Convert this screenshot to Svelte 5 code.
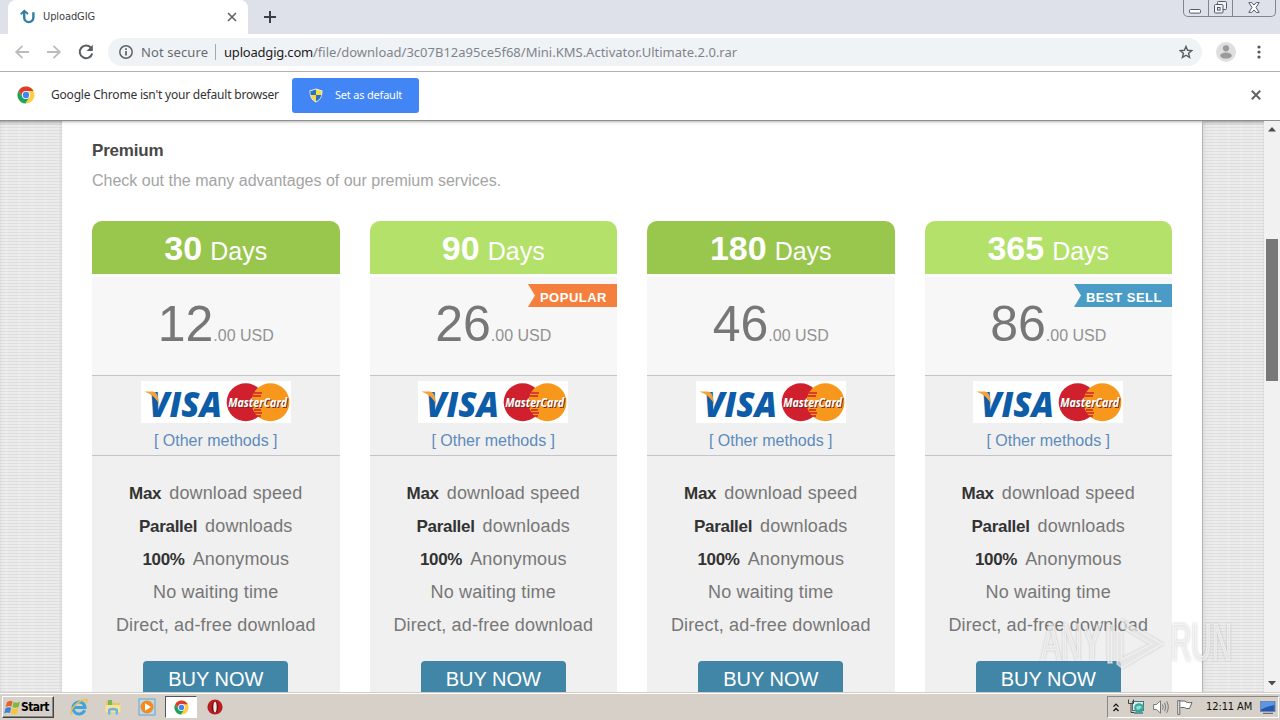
<script lang="ts">
  type Plan = {
    days: number;
    price: number;
    light?: boolean;
    badge?: string;
    badgeColor?: string;
  };

  const plans: Plan[] = [
    { days: 30, price: 12 },
    { days: 90, price: 26, light: true, badge: 'POPULAR', badgeColor: '#f5803e' },
    { days: 180, price: 46 },
    { days: 365, price: 86, light: true, badge: 'BEST SELL', badgeColor: '#4a9cc7' }
  ];

  const features = [
    { strong: 'Max', text: 'download speed' },
    { strong: 'Parallel', text: 'downloads' },
    { strong: '100%', text: 'Anonymous' },
    { strong: '', text: 'No waiting time' },
    { strong: '', text: 'Direct, ad-free download' }
  ];
</script>

{#snippet chromeLogo(size: number)}
  <svg width={size} height={size} viewBox="0 0 18 18">
    <circle cx="9" cy="9" r="8.5" fill="#ffcd40" />
    <path d="M1.6 4.8 A8.5 8.5 0 0 0 8.3 17.5 L12.4 11 L9 9 L5.6 11 Z" fill="#1da462" />
    <path d="M1.6 4.8 A8.5 8.5 0 0 1 16.5 5 H9 L5.4 10 Z" fill="#de3b30" />
    <circle cx="9" cy="9" r="4.1" fill="#fff" />
    <circle cx="9" cy="9" r="3.2" fill="#4384f3" />
  </svg>
{/snippet}

<div class="screen">
  <header class="tabstrip">
    <div class="tab">
      <svg class="favicon" width="16" height="16" viewBox="0 0 16 16" fill="none">
        <path d="M4.2 3 V8.5 A4.6 4.6 0 0 0 13.4 8.5 V3.2" stroke="#2f7fa3" stroke-width="2.4" />
        <path d="M.8 5.2 L4.3 1.8 L8 5" stroke="#2f7fa3" stroke-width="1.9" />
      </svg>
      <span class="tab-title">UploadGIG</span>
      <svg width="10" height="10" viewBox="0 0 10 10" stroke="#5f6368" stroke-width="1.6">
        <path d="M1 1 L9 9 M9 1 L1 9" />
      </svg>
    </div>
    <svg class="new-tab" width="12" height="12" viewBox="0 0 12 12" stroke="#3c4043" stroke-width="2">
      <path d="M6 0 V12 M0 6 H12" />
    </svg>
    <div class="window-buttons">
      <div class="wb">
        <svg width="13" height="5"><rect x=".5" y=".5" width="11" height="3.6" rx="1" fill="#fff" stroke="#555b66" /></svg>
      </div>
      <div class="wb">
        <svg width="13" height="13" fill="#f3f4f7" stroke="#555b66">
          <rect x="3.5" y=".5" width="9" height="8" rx="1" />
          <rect x=".5" y="3.5" width="8.5" height="8.5" rx="1" />
          <rect x="3.5" y="6.5" width="2.6" height="2.6" />
        </svg>
      </div>
      <div class="wb wide">
        <svg width="12" height="11" viewBox="0 0 12 11" fill="#fff" stroke="#555b66">
          <path d="M.8 .6 H3.8 L6 3 L8.2 .6 H11.2 L8 5.5 L11.2 10.4 H8.2 L6 8 L3.8 10.4 H.8 L4 5.5 Z" />
        </svg>
      </div>
    </div>
  </header>

  <nav class="toolbar">
    <div class="nav-icons">
      <svg width="16" height="16" viewBox="0 0 16 16" fill="none" stroke="#babcbe" stroke-width="1.8">
        <path d="M15 8 H2.5 M8.5 1.8 L2.2 8 L8.5 14.2" />
      </svg>
      <svg width="16" height="16" viewBox="0 0 16 16" fill="none" stroke="#babcbe" stroke-width="1.8">
        <path d="M1 8 H13.5 M7.5 1.8 L13.8 8 L7.5 14.2" />
      </svg>
      <svg width="16" height="16" viewBox="0 0 16 16" fill="none" stroke="#5a5d61" stroke-width="2">
        <path d="M13.2 4.2 A6.3 6.3 0 1 0 14.2 9.4" />
        <path d="M14.8 .8 V6.9 H8.6 Z" fill="#5a5d61" stroke="none" />
      </svg>
    </div>
    <div class="omnibox">
      <svg width="14" height="14" viewBox="0 0 14 14" fill="none" stroke="#5f6368" stroke-width="1.5">
        <circle cx="7" cy="7" r="6.2" />
        <path d="M7 6 V10.5 M7 3.3 V4.9" stroke-width="1.7" />
      </svg>
      <span class="not-secure">Not secure</span>
      <span class="divider"></span>
      <span class="url"><b>uploadgig.com</b>/file/download/3c07B12a95ce5f68/Mini.KMS.Activator.Ultimate.2.0.rar</span>
      <svg class="star" width="14" height="14" viewBox="0 0 14 14" fill="none" stroke="#5a5d61" stroke-width="1.4">
        <path d="M7 1.4 L8.6 5.3 L12.8 5.6 L9.6 8.3 L10.6 12.4 L7 10.2 L3.4 12.4 L4.4 8.3 L1.2 5.6 L5.4 5.3 Z" />
      </svg>
    </div>
    <svg class="avatar" width="20" height="20" viewBox="0 0 20 20">
      <circle cx="10" cy="10" r="10" fill="#dfdfdf" />
      <circle cx="10" cy="6.3" r="3.1" fill="#9a9a9a" />
      <ellipse cx="10" cy="13.6" rx="5.8" ry="3" fill="#9a9a9a" />
    </svg>
    <svg class="dots" width="4" height="14" viewBox="0 0 4 14" fill="#55585c">
      <circle cx="2" cy="2" r="1.6" /><circle cx="2" cy="7" r="1.6" /><circle cx="2" cy="12" r="1.6" />
    </svg>
  </nav>

  <div class="infobar">
    {@render chromeLogo(18)}
    <span class="info-text">Google Chrome isn't your default browser</span>
    <button class="set-default">
      <svg width="14" height="15" viewBox="0 0 14 15">
        <path d="M7 .5 L13.5 2.5 C13.5 8 12 12 7 14.5 C2 12 .5 8 .5 2.5 Z" fill="#e9eef5" />
        <path d="M7 1.5 V7 H1.6 L1.3 3.2 Z" fill="#2f6fc4" />
        <path d="M7 1.5 V7 H12.4 L12.7 3.2 Z" fill="#f8dc3c" />
        <path d="M7 7 V13.5 C4 12 2.2 10 1.6 7 Z" fill="#f8dc3c" />
        <path d="M7 7 V13.5 C10 12 11.8 10 12.4 7 Z" fill="#2f6fc4" />
      </svg>
      <span>Set as default</span>
    </button>
    <svg class="info-close" width="10" height="10" viewBox="0 0 10 10" stroke="#5f6368" stroke-width="2">
      <path d="M.8 .8 L9.2 9.2 M9.2 .8 L.8 9.2" />
    </svg>
  </div>

  <div class="viewport">
    <main class="page">
      <section class="content">
        <h2>Premium</h2>
        <p class="lead">Check out the many advantages of our premium services.</p>

        <div class="plans">
          {#each plans as plan}
            <article class="plan">
              <div class="plan-head" class:light={plan.light}>
                <strong>{plan.days}</strong><span>Days</span>
              </div>
              <div class="price">
                <span class="amount">{plan.price}</span><span class="cents">.00 USD</span>
                {#if plan.badge}
                  <div class="badge" style:background={plan.badgeColor}>{plan.badge}</div>
                {/if}
              </div>
              <div class="payment">
                <svg class="cards" width="150" height="42" viewBox="0 0 150 42">
                  <rect width="150" height="42" fill="#fff" />
                  <text class="visa" x="8" y="35.5" textLength="73" lengthAdjust="spacingAndGlyphs">VISA</text>
                  <path d="M3.5 10.6 H12 Q15.5 11 16.6 15 L18.5 24 Q14 14.5 3.5 10.6 Z" fill="#f0a23c" />
                  <circle cx="104.7" cy="21.3" r="19" fill="#d0202e" />
                  <circle cx="129.4" cy="21.3" r="19" fill="#f7981d" />
                  <path d="M113 12 H121 M111.5 15 H120 M113 29 H120 M112 32 H121 M114 35 H120" stroke="#d0202e" stroke-width="1.3" />
                  <text class="mc" x="87.2" y="25.9" textLength="59" lengthAdjust="spacingAndGlyphs">MasterCard</text>
                </svg>
                <span class="other">[ Other methods ]</span>
              </div>
              <ul class="features">
                {#each features as { strong, text }}
                  <li>{#if strong}<b>{strong}</b>{/if}{text}</li>
                {/each}
              </ul>
              <button class="buy">BUY NOW</button>
            </article>
          {/each}
        </div>
      </section>
    </main>
    <div class="scrollbar">
      <svg width="8" height="5"><path d="M0 4.5 L4 0 L8 4.5 Z" fill="#4d4d4d" /></svg>
      <div class="thumb"></div>
      <svg class="down" width="8" height="5"><path d="M0 0 L4 4.5 L8 0 Z" fill="#4d4d4d" /></svg>
    </div>
  </div>

  <footer class="taskbar">
    <div class="start">
      <svg width="17" height="17" viewBox="0 0 17 17">
        <path d="M3 3.2 Q6 .6 8.6 2.4 L7.4 7.6 Q4.6 6.2 1.6 8.2 Z" fill="#e8602c" />
        <path d="M9.6 3 Q12.4 4.6 16 2.8 L14.6 8 Q11.4 9.6 8.4 8 Z" fill="#7fb93c" />
        <path d="M1.4 9.4 Q4.4 7.4 7.2 8.8 L5.9 14 Q3.2 12.6 .2 14.6 Z" fill="#3f7fd6" />
        <path d="M8.2 9.2 Q11 10.8 14.4 9 L13 14.4 Q9.8 16 6.8 14.4 Z" fill="#f8c62c" />
      </svg>
      <span>Start</span>
    </div>
    <div class="pinned">
      <svg width="18" height="18" viewBox="0 0 18 18" fill="none">
        <path d="M14.6 12.2 A6 6 0 1 1 15 9.6 H4" stroke="#3fa3dc" stroke-width="3" />
        <path d="M2 16.5 C-1.5 12 8 2 16.5 1.5 C17.5 2.5 16.8 4 16 5" stroke="#ecc04a" stroke-width="1.5" />
      </svg>
      <svg width="18" height="18" viewBox="0 0 18 18">
        <path d="M2 3 H8 L9.5 5 H16 V15 H2 Z" fill="#e6c665" />
        <path d="M4 2 H8 V7 H4 Z" fill="#78b75b" />
        <path d="M1.5 7 H16.5 V14.5 H1.5 Z" fill="#f7e39a" />
        <path d="M4 16.5 V11 Q9 8.5 14 11 V16.5 H11.5 V12.5 H6.5 V16.5 Z" fill="#70b6e3" />
      </svg>
      <svg width="18" height="18" viewBox="0 0 18 18">
        <rect x="1" y="1" width="16" height="16" fill="#b9d9ee" stroke="#6ba3ca" />
        <circle cx="9" cy="9" r="6.5" fill="#f28a1d" />
        <path d="M7 5.2 L13 9 L7 12.8 Z" fill="#fff" />
      </svg>
      <div class="active-app">{@render chromeLogo(15)}</div>
      <svg width="16" height="16" viewBox="0 0 16 16">
        <circle cx="8" cy="8" r="7.6" fill="#ba1c20" />
        <ellipse cx="8" cy="8" rx="3.2" ry="6.1" fill="#6e0d10" />
        <ellipse cx="8" cy="8" rx="1.7" ry="5.6" fill="#f3e9e6" />
      </svg>
    </div>
    <div class="tray">
      <svg width="6" height="9" viewBox="0 0 6 9" fill="none" stroke="#111" stroke-width="1.3">
        <path d="M.5 3.6 L3 1.1 L5.5 3.6 M.5 8 L3 5.5 L5.5 8" />
      </svg>
      <svg width="18" height="16" viewBox="0 0 18 16">
        <rect x="5.5" y="2.5" width="11" height="9" fill="#d9eef0" stroke="#4c6f78" />
        <rect x="7" y="13" width="9" height="2" fill="#6f8f97" />
        <circle cx="12" cy="9" r="4.8" fill="#3aa6a0" />
        <path d="M9 8 Q12 5 15 8 Q13 11 10 11" fill="#8fe0c5" />
        <path d="M1.5 .5 V4.5 H6.5 V.5 M4 4.5 V13.5 H7" stroke="#444" fill="none" />
      </svg>
      <svg width="16" height="14" viewBox="0 0 16 14" fill="none" stroke="#777">
        <path d="M.6 4.5 H3.5 L7.5 .8 V13.2 L3.5 9.5 H.6 Z" fill="#fff" />
        <path d="M9.5 4.5 Q11 7 9.5 9.5 M11.6 2.8 Q14 7 11.6 11.2 M13.6 1.2 Q17 7 13.6 12.8" />
      </svg>
      <svg width="16" height="15" viewBox="0 0 16 15" fill="#fff" stroke="#666">
        <path d="M2.5 1 H8 Q9 3 15 2.5 L12.5 8.5 Q8.5 9 7.5 7.5 H3.5" />
        <path d="M.8 .6 H2.8 V14.4 H.8 Z" />
      </svg>
      <span class="clock">12:11 AM</span>
      <svg width="16" height="13" viewBox="0 0 16 13">
        <rect x=".5" y=".5" width="14.5" height="10" fill="#2458b0" stroke="#6f88b4" />
        <path d="M1 1 H14.5 V4 Q8 5 1 8.5 Z" fill="#5c96e2" />
        <path d="M3 12.3 H13" stroke="#555" />
      </svg>
    </div>
  </footer>

  <svg class="watermark" width="196" height="54" viewBox="0 0 196 54">
    <g fill="#fff" fill-opacity=".55" stroke="#fff" stroke-opacity=".5" stroke-width="1.6">
      <text x="2" y="43" textLength="61" lengthAdjust="spacingAndGlyphs">ANY</text>
      <path d="M83 3 L124 27 L83 51 L78 47 V13 L83 16 V42 L112 27 L83 10 Z" />
      <path d="M69 8 H73 V46 H69 Z" />
      <text x="132" y="43" textLength="61" lengthAdjust="spacingAndGlyphs">RUN</text>
    </g>
  </svg>
</div>

<style>
  :global(body) {
    overflow: hidden;
  }

  * {
    box-sizing: border-box;
  }

  svg {
    display: block;
    flex-shrink: 0;
  }

  .screen {
    position: relative;
    display: flex;
    flex-direction: column;
    width: 1280px;
    height: 720px;
    overflow: hidden;
    background: #fff;
    font-family: 'Liberation Sans', Arial, sans-serif;
    white-space: nowrap;
  }

  .tabstrip {
    display: flex;
    height: 34px;
    padding-left: 8px;
    background: #dee1e9;
  }

  .tab {
    display: flex;
    align-items: center;
    width: 240px;
    height: 34px;
    padding: 0 11px 0 12px;
    border-radius: 8px 8px 0 0;
    background: #fff;
  }

  .tab-title {
    flex: 1;
    margin-left: 7px;
    font: 11px/16px 'DejaVu Sans Condensed', 'DejaVu Sans', sans-serif;
    color: #3c4043;
    letter-spacing: -0.1px;
  }

  .new-tab {
    margin: 11px 0 0 16px;
  }

  .window-buttons {
    display: flex;
    width: 93px;
    height: 17px;
    margin: 0 4px 0 auto;
    border: 1px solid #80858f;
    border-top: 0;
    border-radius: 0 0 5px 5px;
  }

  .wb {
    display: flex;
    justify-content: center;
    align-items: flex-end;
    width: 25px;
    padding-bottom: 2px;
    border-right: 1px solid #80858f;
  }

  .wb.wide {
    width: 42px;
    padding-bottom: 3px;
    border: 0;
  }

  .toolbar {
    display: flex;
    align-items: center;
    height: 38px;
    padding: 0 0 1px 14px;
    border-bottom: 1px solid #b0b0b0;
    background: #fff;
  }

  .nav-icons {
    display: flex;
    gap: 16px;
  }

  .omnibox {
    display: flex;
    align-items: center;
    width: 1094px;
    height: 28px;
    margin-left: 14px;
    padding: 0 9px 0 11px;
    border-radius: 14px;
    background: #f0f3f6;
    font: 13px/20px 'Noto Sans', sans-serif;
    color: #80848a;
  }

  .not-secure {
    width: 67px;
    margin-left: 8px;
    color: #686c71;
    letter-spacing: 0.1px;
  }

  .divider {
    width: 1px;
    height: 16px;
    margin: 0 8px 0 7px;
    background: #a4a7ab;
  }

  .url b {
    font-weight: 400;
    color: #202124;
    letter-spacing: -0.2px;
  }

  .star {
    margin-left: auto;
  }

  .avatar {
    margin-left: 14px;
  }

  .dots {
    margin-left: 21px;
  }

  .infobar {
    display: flex;
    align-items: center;
    height: 49px;
    padding: 0 19px 2px 17px;
    border-bottom: 1px solid #8f8f8f;
    background: #fff;
  }

  .info-text {
    width: 228px;
    margin-left: 16px;
    font: 12px/18px 'Noto Sans', sans-serif;
    color: #333;
    letter-spacing: -0.2px;
  }

  .set-default {
    display: flex;
    align-items: center;
    gap: 12px;
    width: 127px;
    height: 35px;
    margin-left: 13px;
    padding: 0 0 0 17px;
    border: 0;
    border-radius: 3px;
    background: #4285f4;
    font: 11px/16px 'Noto Sans', sans-serif;
    color: #fff;
    letter-spacing: -0.2px;
  }

  .info-close {
    margin-left: auto;
  }

  .viewport {
    display: flex;
    height: 571px;
  }

  .page {
    width: 1264px;
    height: 571px;
    overflow: hidden;
    padding-left: 62px;
    background:
      repeating-linear-gradient(90deg, transparent 0 5px, rgba(255, 255, 255, 0.1) 5px 8px, transparent 8px 13px),
      repeating-linear-gradient(#dedede 0 1px, #ebebeb 1px 3px);
    box-shadow: inset 0 3px 3px -1px rgba(0, 0, 0, 0.25);
  }

  .content {
    width: 1141px;
    height: 571px;
    padding: 19px 30px 0;
    border-right: 1px solid #b5b5b5;
    background: #fff;
    box-shadow: 0 0 5px rgba(0, 0, 0, 0.12), inset 0 3px 3px -2px rgba(0, 0, 0, 0.3);
  }

  h2 {
    margin: 0;
    font-size: 17px;
    line-height: 22px;
    font-weight: 700;
    color: #484848;
    letter-spacing: -0.2px;
  }

  .lead {
    margin: 9px 0 30px;
    font-size: 16px;
    line-height: 20px;
    color: #a4a4a4;
  }

  .plans {
    display: flex;
    gap: 30px;
    width: 1080px;
  }

  .plan {
    display: flex;
    flex-direction: column;
    align-items: center;
    width: 247.5px;
    height: 480px;
    background: #f0f0f0;
    border-radius: 10px 10px 0 0;
  }

  .plan-head {
    display: flex;
    align-items: baseline;
    justify-content: center;
    gap: 8px;
    width: 100%;
    height: 53px;
    border-radius: 10px 10px 0 0;
    background: #99c64d;
    color: #fff;
  }

  .plan-head.light {
    background: #b3e169;
  }

  .plan-head strong {
    font-size: 34px;
    line-height: 55px;
  }

  .plan-head span {
    font-size: 25px;
  }

  .price {
    position: relative;
    display: flex;
    align-items: baseline;
    justify-content: center;
    width: 100%;
    height: 102px;
    border-top: 3px solid #fcfcfc;
    border-bottom: 1px solid #c4c4c4;
    background: #f7f7f7;
  }

  .amount {
    font-size: 50px;
    line-height: 94px;
    color: #777;
  }

  .cents {
    font-size: 16px;
    color: #929292;
  }

  .badge {
    position: absolute;
    top: 7px;
    right: 0;
    height: 23px;
    padding: 0 10px 0 12px;
    clip-path: polygon(0 0, 100% 0, 100% 100%, 0 100%, 7px 50%);
    font-size: 13px;
    line-height: 27px;
    font-weight: 700;
    color: #fff;
    letter-spacing: 0.5px;
  }

  .payment {
    display: flex;
    flex-direction: column;
    align-items: center;
    width: 100%;
    height: 80px;
    padding-top: 5px;
    border-bottom: 1px solid #c4c4c4;
  }

  .cards {
    overflow: visible;
  }

  .visa {
    font: italic 800 35px 'Open Sans', sans-serif;
    fill: #0d5ca8;
  }

  .mc {
    font: italic 700 12px 'Open Sans', sans-serif;
    fill: #fff;
    text-shadow: 1px 1px 0 #7c2a2a;
  }

  .other {
    margin-top: 7px;
    font-size: 16px;
    line-height: 21px;
    color: #5d8bbb;
  }

  .features {
    margin: 0;
    padding: 21px 0 0;
    list-style: none;
    text-align: center;
    font-size: 18px;
    line-height: 33px;
    color: #777;
    letter-spacing: 0.15px;
  }

  .features b {
    margin-right: 8px;
    font-size: 17px;
    color: #333;
    letter-spacing: -0.3px;
  }

  .buy {
    width: 145px;
    height: 36px;
    margin-top: 19px;
    padding: 0;
    border: 0;
    border-radius: 4px 4px 0 0;
    background: #4186a6;
    font: 20px/34px 'Liberation Sans', Arial, sans-serif;
    color: #fff;
  }

  .scrollbar {
    display: flex;
    flex-direction: column;
    align-items: center;
    width: 16px;
    padding-top: 6px;
    background: #f1f1f1;
  }

  .thumb {
    width: 12px;
    height: 142px;
    margin-top: 107px;
    background: #787878;
  }

  .down {
    margin: auto 0 6px;
  }

  .taskbar {
    display: flex;
    align-items: flex-start;
    height: 28px;
    padding: 3px 1px 0 2px;
    border-top: 1px solid #d0cbc5;
    box-shadow: inset 0 1px 0 #fff;
    background: #d6d0c8;
  }

  .start {
    display: flex;
    align-items: center;
    width: 52px;
    height: 22px;
    padding-left: 1px;
    border: 1px solid;
    border-color: #fff #444 #444 #fff;
    box-shadow: inset -1px -1px 0 #888;
    font: 700 12px/18px 'DejaVu Sans Condensed', 'DejaVu Sans', sans-serif;
    color: #000;
    letter-spacing: -0.6px;
  }

  .pinned {
    display: flex;
    align-items: center;
    height: 22px;
    margin-left: 16px;
    gap: 16px;
  }

  .active-app {
    display: flex;
    align-items: center;
    justify-content: center;
    width: 32px;
    height: 22px;
    margin: 0 -6px 0 -7px;
    border: 1px solid;
    border-color: #555 #fff #fff #555;
    background: #fff;
  }

  .tray {
    display: flex;
    align-items: center;
    width: 172px;
    height: 22px;
    margin-left: auto;
    padding-left: 5px;
    border: 1px solid;
    border-color: #888 #fff #fff #888;
  }

  .tray svg + svg {
    margin-left: 8px;
  }

  .clock {
    width: 47px;
    margin: 0 7px 0 13px;
    font: 11px/16px 'DejaVu Sans Condensed', 'DejaVu Sans', sans-serif;
    color: #111;
    letter-spacing: -0.1px;
  }

  .watermark {
    position: absolute;
    left: 1039px;
    top: 617px;
    overflow: visible;
    font-size: 52px;
    filter: drop-shadow(0 0 1px rgba(110, 110, 110, 0.55));
  }
</style>
